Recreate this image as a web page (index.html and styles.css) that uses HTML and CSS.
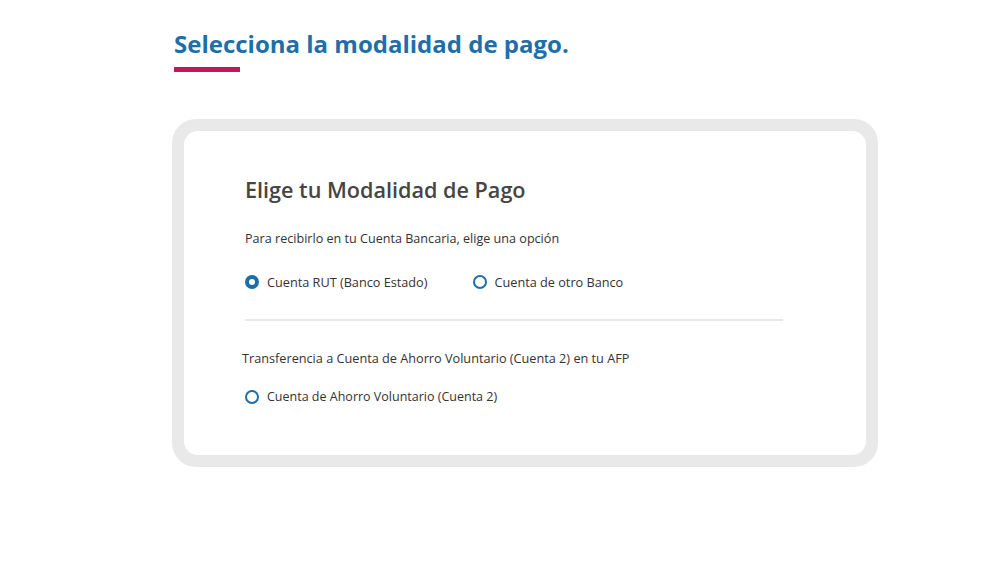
FILE: index.html
```html
<!DOCTYPE html>
<html lang="es">
<head>
<meta charset="utf-8">
<link rel="stylesheet" href="styles.css">
</head>
<body>
<main class="page">
  <header class="page-head">
    <h1 class="page-title">Selecciona la modalidad de pago.</h1>
    <div class="title-bar"></div>
  </header>
  <section class="frame">
    <div class="card">
      <h2 class="card-title">Elige tu Modalidad de Pago</h2>
      <p class="hint">Para recibirlo en tu Cuenta Bancaria, elige una opción</p>
      <div class="options">
        <label class="option"><span class="radio checked"></span>Cuenta RUT (Banco Estado)</label>
        <label class="option"><span class="radio"></span>Cuenta de otro Banco</label>
      </div>
      <hr class="divider">
      <p class="hint hint-2">Transferencia a Cuenta de Ahorro Voluntario (Cuenta 2) en tu AFP</p>
      <div class="options options-2">
        <label class="option"><span class="radio"></span>Cuenta de Ahorro Voluntario (Cuenta 2)</label>
      </div>
    </div>
  </section>
</main>
</body>
</html>
```

FILE: styles.css
```css
* { box-sizing: border-box; }
html, body { margin: 0; padding: 0; background: #fff; }
body { font-family: "Open Sans", Lato, sans-serif; color: #333; }
.page { width: 1000px; height: 573px; padding: 29px 0 0 172px; }
.page-head { padding-left: 2px; }
.page-title {
  margin: 0;
  font-size: 24px;
  font-weight: 700;
  color: #1e6fa9;
  line-height: 30px;
}
.title-bar { width: 66px; height: 5px; background: #c2185b; margin-top: 8px; }
.frame {
  margin-top: 47px;
  width: 706px;
  height: 348px;
  background: #e9e9e9;
  border-radius: 24px;
  padding: 12px;
}
.card {
  background: #fff;
  border-radius: 14px;
  height: 100%;
  padding: 45px 83px 0 61px;
}
.card-title {
  margin: 0;
  font-size: 21.6px;
  font-weight: 600;
  color: #454545;
  line-height: 28px;
}
.hint {
  margin: 26px 0 0;
  font-size: 12.6px;
  color: #333;
  line-height: 18px;
}
.options { display: flex; gap: 45px; margin-top: 25px; }
.option { display: flex; align-items: center; gap: 8px; font-size: 12.7px; color: #333; line-height: 18px; }
.radio {
  width: 14px; height: 14px;
  border-radius: 50%;
  border: 2px solid #1e6fa9;
  background: #fff;
}
.radio.checked { border-width: 4px; }
.divider { border: 0; height: 2px; background: #e8e8e8; margin: 28px 0 0; width: 538px; }
.hint-2 { margin-top: 28px; margin-left: -3px; font-size: 12.7px; }
.options-2 { margin-top: 21px; }
.options-2 .option { font-size: 12.5px; }
```
